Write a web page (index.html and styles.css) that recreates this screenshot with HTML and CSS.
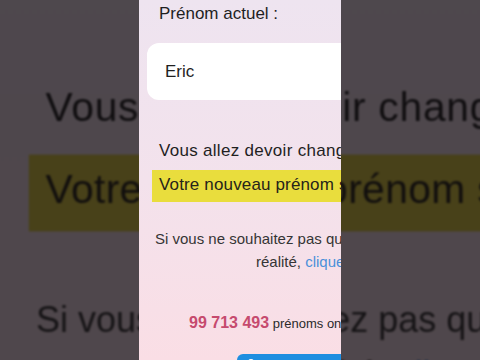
FILE: index.html
```html
<!DOCTYPE html>
<html lang="fr">
<head>
<meta charset="utf-8">
<title>Prénom</title>
<link rel="stylesheet" href="styles.css">
</head>
<body>
<div class="stage">
  <div class="backdrop" aria-hidden="true">
    <div class="screen screen-zoom">
      <p class="label">Prénom actuel :</p>
      <div class="field">Eric</div>
      <p class="warn">Vous allez devoir changer de prénom</p>
      <p class="highlight">Votre nouveau prénom sera :</p>
      <p class="note"><span class="note-l1">Si vous ne souhaitez pas que cela arrive en</span><span class="note-l2">réalité, <a class="link">cliquez ici</a>.</span></p>
      <p class="count"><strong class="count-num">99 713 493</strong> prénoms ont été changés</p>
      <div class="cta"><svg class="cta-icon" viewBox="0 0 16 16" width="16" height="16"><circle cx="8" cy="5" r="3" fill="#fff"/><path d="M2 15c0-3.5 2.7-5.5 6-5.5s6 2 6 5.5z" fill="#fff"/></svg></div>
    </div>
    <div class="shade"></div>
  </div>
  <div class="screen screen-front">
    <p class="label">Prénom actuel :</p>
    <div class="field">Eric</div>
    <p class="warn">Vous allez devoir changer de prénom</p>
    <p class="highlight">Votre nouveau prénom sera :</p>
    <p class="note"><span class="note-l1">Si vous ne souhaitez pas que cela arrive en</span><span class="note-l2">réalité, <a class="link">cliquez ici</a>.</span></p>
    <p class="count"><strong class="count-num">99 713 493</strong> prénoms ont été changés</p>
    <div class="cta"><svg class="cta-icon" viewBox="0 0 16 16" width="16" height="16"><circle cx="8" cy="5" r="3" fill="#fff"/><path d="M2 15c0-3.5 2.7-5.5 6-5.5s6 2 6 5.5z" fill="#fff"/></svg></div>
  </div>
</div>
</body>
</html>
```
FILE: styles.css
```css
* { box-sizing: border-box; }
html, body { margin: 0; padding: 0; }
body {
  width: 480px;
  height: 360px;
  overflow: hidden;
  font-family: "Liberation Sans", Arial, sans-serif;
  background: #4a4648;
}
.stage {
  position: relative;
  width: 480px;
  height: 360px;
  display: flex;
  justify-content: center;
  overflow: hidden;
  background: #4a4648;
}
.backdrop {
  position: absolute;
  inset: 0;
  display: flex;
  justify-content: center;
  overflow: hidden;
}
.shade {
  position: absolute;
  inset: 0;
  background: rgba(8, 6, 8, 0.7);
}
.screen {
  width: 202px;
  height: 360px;
  flex: none;
  overflow: hidden;
  display: flex;
  flex-direction: column;
  padding-top: 4px;
  background: linear-gradient(180deg, #eee4f0 0%, #f3e2ec 50%, #fadee5 100%);
  color: #1f1f1f;
}
.screen-zoom {
  transform: scale(2.4);
  transform-origin: 101px 181px;
  filter: blur(0.5px);
}
.screen-zoom .highlight { background: #ddcc40; }
.screen-front {
  position: relative;
  z-index: 1;
}
.label {
  margin: 0;
  padding-left: 20px;
  font-size: 17px;
  line-height: 20px;
  white-space: nowrap;
}
.field {
  margin: 19px 0 0 8px;
  height: 57px;
  width: 240px;
  flex: none;
  background: #fff;
  border-radius: 12px;
  display: flex;
  align-items: center;
  padding-left: 18px;
  font-size: 17px;
}
.warn {
  margin: 41px 0 0;
  padding-left: 20px;
  font-size: 17px;
  line-height: 20px;
  letter-spacing: 0.3px;
  white-space: nowrap;
}
.highlight {
  margin: 9px 0 0 13px;
  padding: 5px 0 7px 7px;
  background: #e9dd3d;
  font-size: 17px;
  line-height: 20px;
  letter-spacing: 0.15px;
  white-space: nowrap;
  color: #26241a;
}
.note {
  margin: 25px 0 0;
  font-size: 15px;
  line-height: 23px;
  color: #353535;
  display: flex;
  flex-direction: column;
  white-space: nowrap;
}
.note-l1 { padding-left: 16px; }
.note-l2 { padding-left: 117px; }
.link { color: #4a90d9; }
.count {
  margin: 40px 0 0;
  padding-left: 50px;
  font-size: 13px;
  line-height: 20px;
  white-space: nowrap;
  color: #2a2a2a;
}
.count-num {
  font-size: 16px;
  font-weight: bold;
  color: #c64a6e;
}
.cta {
  margin: 20px 0 0 98px;
  width: 160px;
  height: 40px;
  flex: none;
  background: #1e8ee0;
  border-radius: 6px;
  padding: 3px 0 0 6px;
}
.cta-icon { display: block; }
```
